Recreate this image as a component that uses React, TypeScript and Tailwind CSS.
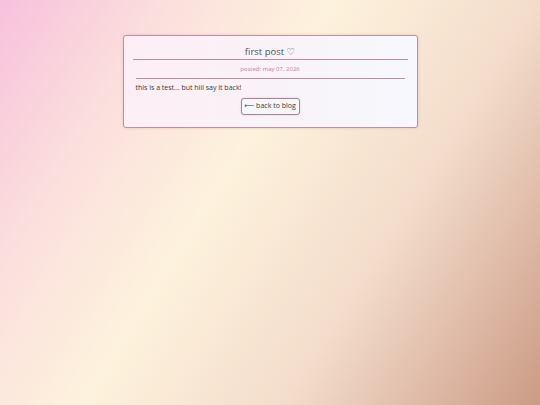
export default function App() {
  return (
    <div
      className="min-h-[405px] w-full pt-[35px] flex justify-center"
      style={{
        background:
          'linear-gradient(122deg, #f7c1dc 0%, #fbe0dd 22%, #fdf2dd 42%, #f3dccb 68%, #cb9b85 100%)',
        fontFamily: "'Open Sans', 'DejaVu Sans', sans-serif",
      }}
    >
      <div className="w-[295px] h-[93px] rounded-[3px] border border-[#b9919f] bg-gradient-to-r from-[#fdeef5] to-[#f6f8fd] shadow-[0_0_3px_rgba(150,100,110,0.25)] px-[9px] pt-[8px] flex flex-col">
        <div className="text-center text-[9.5px] leading-[15px] text-[#4c5558]">first post ♡</div>
        <div className="h-px bg-[#b88d9d]" />
        <div className="text-center text-[6px] leading-[18px] text-[#d077a1]">posted: may 07, 2026</div>
        <div className="mx-[3px] h-px bg-[#b88d9d]" />
        <div className="px-[3px] pt-[4px] text-[7px] leading-[10px] text-[#3a3a3a]">
          this is a test... but hiii say it back!
        </div>
        <div className="flex justify-center pt-[5px]">
          <button className="h-[17px] w-[59px] rounded-[3px] border border-[#a98494] bg-[#f6f6fb] text-[7px] text-[#3a3f44] shadow-[0_0_2px_rgba(150,100,110,0.3)]">
            ⟵ back to blog
          </button>
        </div>
      </div>
    </div>
  )
}
